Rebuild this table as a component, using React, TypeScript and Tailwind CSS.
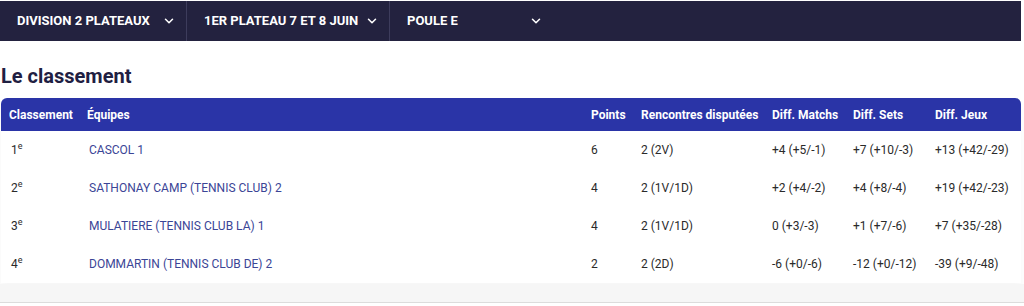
import React from 'react';

type Row = {
  rank: number;
  team: string;
  points: number;
  played: string;
  matchs: string;
  sets: string;
  jeux: string;
};

const rows: Row[] = [
  { rank: 1, team: 'CASCOL 1', points: 6, played: '2 (2V)', matchs: '+4 (+5/-1)', sets: '+7 (+10/-3)', jeux: '+13 (+42/-29)' },
  { rank: 2, team: 'SATHONAY CAMP (TENNIS CLUB) 2', points: 4, played: '2 (1V/1D)', matchs: '+2 (+4/-2)', sets: '+4 (+8/-4)', jeux: '+19 (+42/-23)' },
  { rank: 3, team: 'MULATIERE (TENNIS CLUB LA) 1', points: 4, played: '2 (1V/1D)', matchs: '0 (+3/-3)', sets: '+1 (+7/-6)', jeux: '+7 (+35/-28)' },
  { rank: 4, team: 'DOMMARTIN (TENNIS CLUB DE) 2', points: 2, played: '2 (2D)', matchs: '-6 (+0/-6)', sets: '-12 (+0/-12)', jeux: '-39 (+9/-48)' },
];

const cols = 'grid grid-cols-[79px_503px_50px_131px_81px_82px_1fr]';

const Chevron: React.FC = () => (
  <svg width="14" height="14" viewBox="0 0 24 24" fill="none" stroke="currentColor" strokeWidth="2.6" strokeLinecap="round" strokeLinejoin="round">
    <path d="M6 9l6 6 6-6" />
  </svg>
);

const filters = [
  { label: 'DIVISION 2 PLATEAUX', width: 'w-[187px]' },
  { label: '1ER PLATEAU 7 ET 8 JUIN', width: 'w-[203px]' },
  { label: 'POULE E', width: 'w-[163px]' },
];

const App: React.FC = () => {
  return (
    <div className="w-[1024px] h-[306px] bg-white overflow-hidden font-['Roboto',sans-serif]">
      <div className="w-[1021px]">
        <nav className="mt-px flex h-[40px] bg-[#23223f] text-white">
          {filters.map((f, i) => (
            <div
              key={f.label}
              className={`${f.width} flex items-center justify-between pl-[17px] pr-[10px] ${i < 2 ? 'border-r border-[#3d3c5c]' : ''}`}
            >
              <span className="text-[13px] font-bold">{f.label}</span>
              <Chevron />
            </div>
          ))}
        </nav>

        <h2 className="mt-[23px] pl-px text-[20px] leading-[24px] font-bold text-[#1f2042]">Le classement</h2>

        <div className="mt-[10px] ml-px rounded-t-[6px] bg-white shadow-[0_6px_10px_rgba(0,0,0,0.04)]">
          <div className={`${cols} h-[33px] items-center rounded-t-[6px] bg-[#2a34a7] text-[12px] font-bold text-white`}>
            <div className="pl-[8px]">Classement</div>
            <div className="pl-[7px]">Équipes</div>
            <div className="pl-[8px]">Points</div>
            <div className="pl-[8px]">Rencontres disputées</div>
            <div className="pl-[8px]">Diff. Matchs</div>
            <div className="pl-[8px]">Diff. Sets</div>
            <div className="pl-[8px]">Diff. Jeux</div>
          </div>
          {rows.map((r) => (
            <div key={r.rank} className={`${cols} h-[38px] items-center text-[12px] text-[#2a2a2a]`}>
              <div className="pl-[10px]">
                {r.rank}
                <span className="relative -top-[5px] text-[9px]">e</span>
              </div>
              <div className="pl-[9px] text-[#3b4596]">{r.team}</div>
              <div className="pl-[8px]">{r.points}</div>
              <div className="pl-[8px]">{r.played}</div>
              <div className="pl-[8px]">{r.matchs}</div>
              <div className="pl-[8px]">{r.sets}</div>
              <div className="pl-[8px]">{r.jeux}</div>
            </div>
          ))}
        </div>
      </div>
      <div className="mt-px h-[19px] bg-[#f6f6f6] border-b border-[#dcdcdc]" />
    </div>
  );
};

export default App;
